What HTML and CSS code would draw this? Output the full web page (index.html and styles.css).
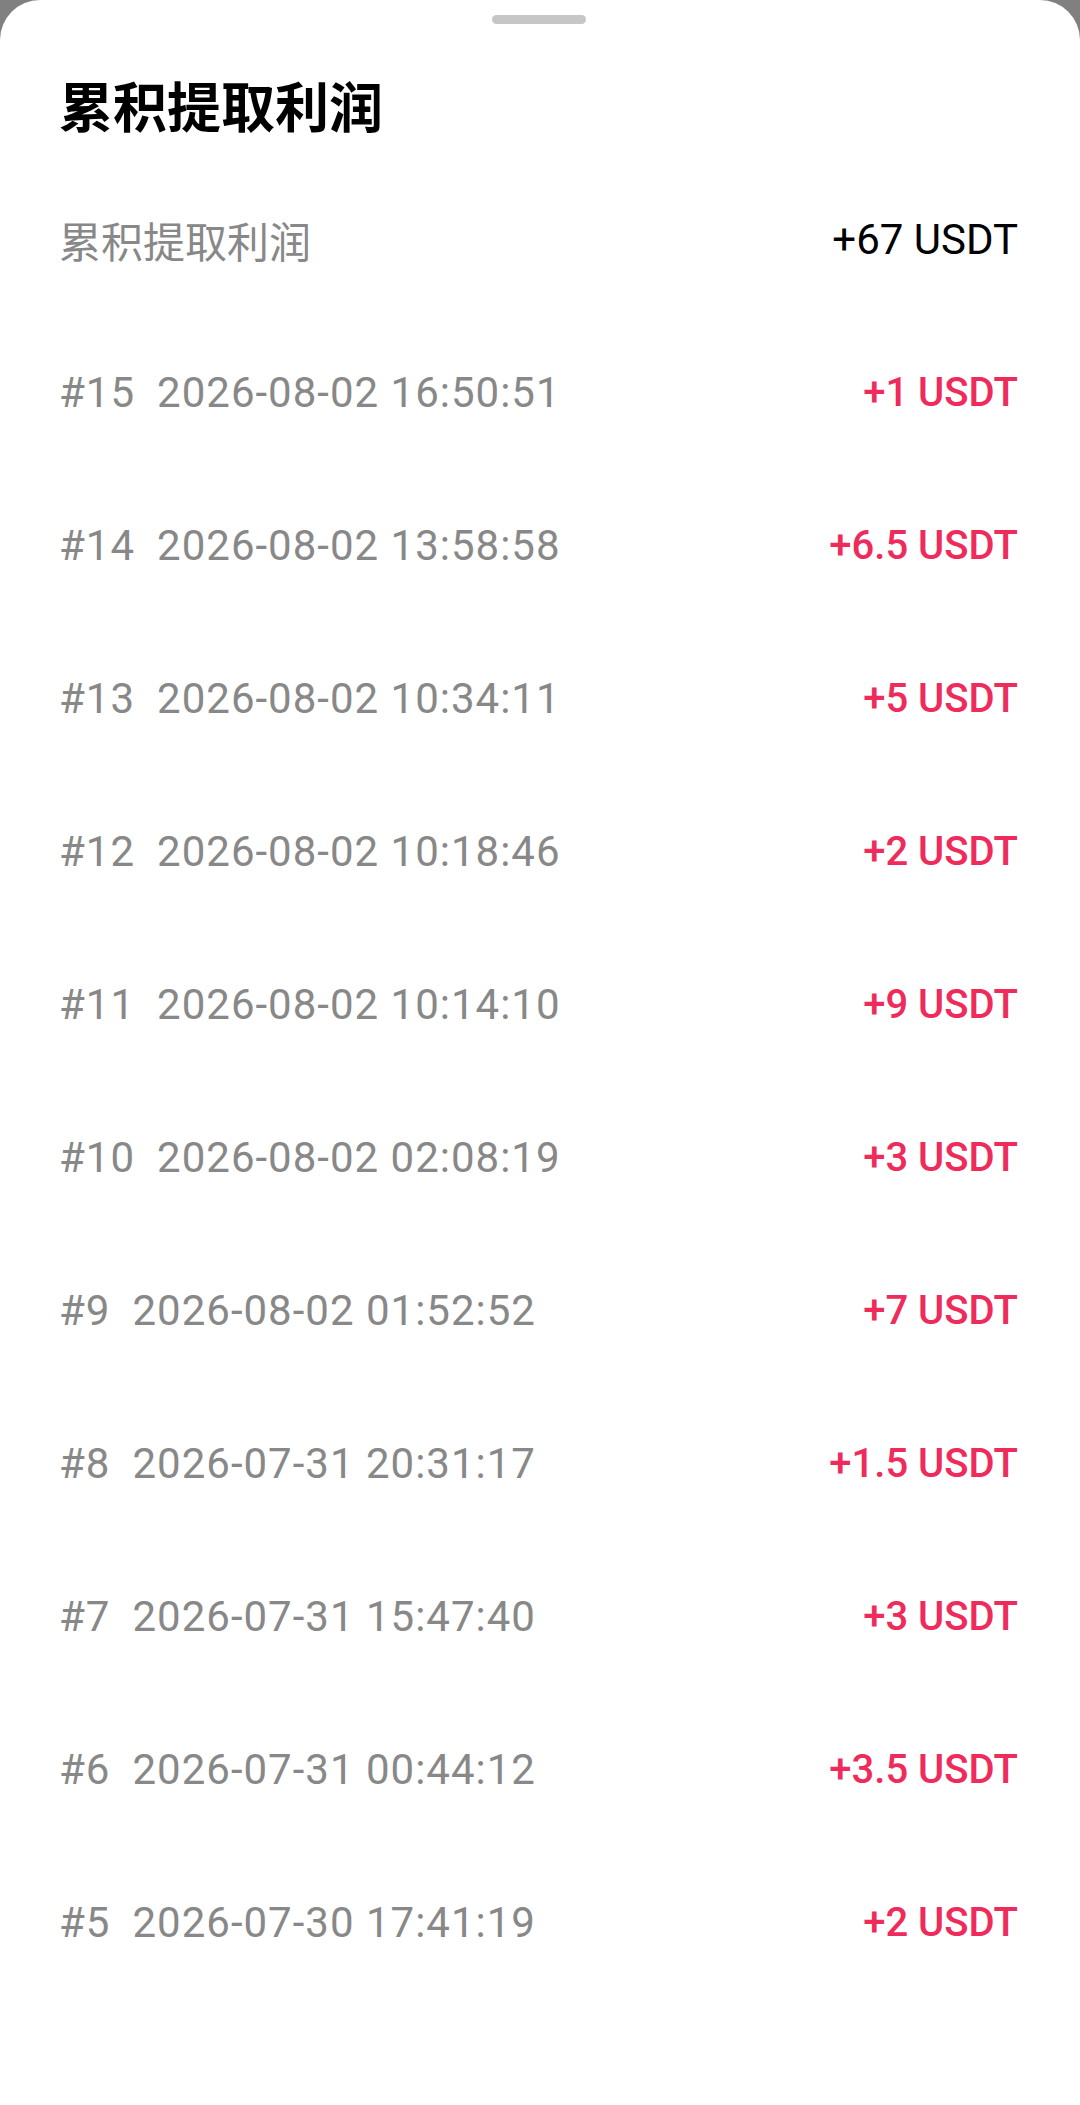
FILE: index.html
```html
<!DOCTYPE html>
<html lang="zh-CN">
<head>
    <meta charset="UTF-8">
    <meta name="viewport" content="width=device-width, initial-scale=1.0">
    <title>累积提取利润</title>
    <link rel="stylesheet" href="styles.css">
</head>
<body>
    <div class="sheet">
        <div class="handle"></div>
        <h1 class="title">累积提取利润</h1>

        <div class="summary">
            <span class="summary-label">累积提取利润</span>
            <span class="summary-value">+67 USDT</span>
        </div>

        <ul class="records">
            <li class="record">
                <span class="record-info"><span class="record-no">#15</span>2026-08-02 16:50:51</span>
                <span class="record-amount">+1 USDT</span>
            </li>
            <li class="record">
                <span class="record-info"><span class="record-no">#14</span>2026-08-02 13:58:58</span>
                <span class="record-amount">+6.5 USDT</span>
            </li>
            <li class="record">
                <span class="record-info"><span class="record-no">#13</span>2026-08-02 10:34:11</span>
                <span class="record-amount">+5 USDT</span>
            </li>
            <li class="record">
                <span class="record-info"><span class="record-no">#12</span>2026-08-02 10:18:46</span>
                <span class="record-amount">+2 USDT</span>
            </li>
            <li class="record">
                <span class="record-info"><span class="record-no">#11</span>2026-08-02 10:14:10</span>
                <span class="record-amount">+9 USDT</span>
            </li>
            <li class="record">
                <span class="record-info"><span class="record-no">#10</span>2026-08-02 02:08:19</span>
                <span class="record-amount">+3 USDT</span>
            </li>
            <li class="record">
                <span class="record-info"><span class="record-no">#9</span>2026-08-02 01:52:52</span>
                <span class="record-amount">+7 USDT</span>
            </li>
            <li class="record">
                <span class="record-info"><span class="record-no">#8</span>2026-07-31 20:31:17</span>
                <span class="record-amount">+1.5 USDT</span>
            </li>
            <li class="record">
                <span class="record-info"><span class="record-no">#7</span>2026-07-31 15:47:40</span>
                <span class="record-amount">+3 USDT</span>
            </li>
            <li class="record">
                <span class="record-info"><span class="record-no">#6</span>2026-07-31 00:44:12</span>
                <span class="record-amount">+3.5 USDT</span>
            </li>
            <li class="record">
                <span class="record-info"><span class="record-no">#5</span>2026-07-30 17:41:19</span>
                <span class="record-amount">+2 USDT</span>
            </li>
        </ul>
    </div>
</body>
</html>
```

FILE: styles.css
```css
body {
    margin: 0;
    padding: 0;
    background-color: #808080;
    font-family: Roboto, "Noto Sans CJK SC", sans-serif;
}

.sheet {
    min-height: 100vh;
    box-sizing: border-box;
    background-color: #ffffff;
    border-radius: 40px 40px 0 0;
    padding: 15px 62px 0 59px;
}

.handle {
    width: 94px;
    height: 9px;
    margin: 0 auto;
    border-radius: 5px;
    background-color: #c6c6c6;
}

.title {
    margin: 46px 0 0;
    font-family: "Noto Sans CJK SC", sans-serif;
    font-size: 54px;
    font-weight: 700;
    line-height: 70px;
    color: #000000;
}

.summary, .record {
    height: 153px;
    display: flex;
    align-items: center;
    justify-content: space-between;
}

.summary {
    margin-top: 23px;
}

.summary-label {
    font-family: "Noto Sans CJK SC", sans-serif;
    font-size: 42px;
    color: #888888;
}

.summary-value {
    font-size: 42px;
    color: #000000;
}

.records {
    list-style: none;
    margin: 0;
    padding: 0;
}

.record-info {
    font-size: 42px;
    letter-spacing: 1px;
    color: #888888;
}

.record-no {
    margin-right: 22px;
}

.record-amount {
    font-size: 40px;
    font-weight: 500;
    color: #ee2b5b;
}
```
